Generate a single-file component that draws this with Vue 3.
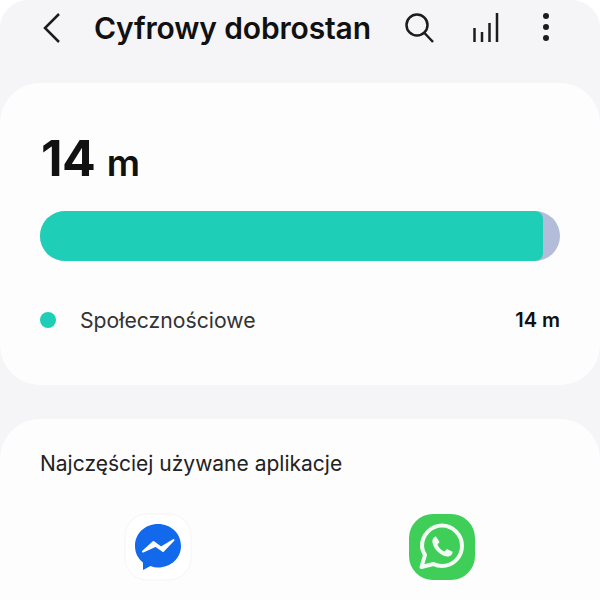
<script setup>
const apps = [{ name: "messenger" }, { name: "whatsapp" }];
</script>

<template>
  <div class="screen">
    <header class="topbar">
      <svg class="back" width="20" height="32" viewBox="0 0 20 32">
        <path d="M17 2 L3 16 L17 30" />
      </svg>
      <h1>Cyfrowy dobrostan</h1>
      <svg class="search" width="32" height="32" viewBox="0 0 32 32">
        <circle cx="14" cy="13" r="10.5" />
        <path d="M21.5 21 L30 30" />
      </svg>
      <svg class="bars" width="26" height="32" viewBox="0 0 26 32">
        <path d="M1.5 16 V30 M9 20 V30 M16.5 11 V30 M24 1 V30" />
      </svg>
      <div class="dots"><span></span><span></span><span></span></div>
    </header>

    <section class="card usage">
      <div class="total">14 <small>m</small></div>
      <div class="bar"><div class="fill"></div></div>
      <div class="legend">
        <span class="dot"></span>
        <span class="label">Społecznościowe</span>
        <span class="time">14 m</span>
      </div>
    </section>

    <section class="card apps">
      <h2>Najczęściej używane aplikacje</h2>
      <div class="appRow">
        <div v-for="app in apps" :key="app.name" class="appCell">
          <svg v-if="app.name == 'messenger'" width="68" height="68" viewBox="0 0 68 68">
            <rect x="1" y="1" width="66" height="66" rx="22" fill="#fff" stroke="#f6f4f6" />
            <path d="M34 11 C21 11 11 20.500 11 33 C11 40 14 45.500 19 49.500 V57 L26.500 53 C29 54 31.500 54.500 34 54.500 C47 54.500 57 45 57 33 C57 20.500 47 11 34 11 Z" fill="#1269ec" />
            <path d="M19 38.500 L29.500 29 L37 34.500 L49.500 27 L39 38 L31.500 32.800 Z" fill="#fff" stroke="#fff" stroke-width="2" stroke-linejoin="round" />
          </svg>
          <svg v-else width="68" height="68" viewBox="0 0 68 68">
            <rect x="1" y="1" width="66" height="66" rx="24" fill="#3fcf58" />
            <path d="M13.500 54 L17 42 C15 38.500 14 36 14 33 C14 22 23 12.500 34 12.500 C45 12.500 54 22 54 33 C54 44 45 53 34 53 C31 53 28 52.300 25.500 51 Z" fill="none" stroke="#f4fbf4" stroke-width="4" stroke-linejoin="round" />
            <path d="M28 23.500 C26 23.500 24 26 24.500 29.500 C25.500 36 32 42.500 39 43.500 C42 44 45 41.500 44.500 38.800 L39 36 L36.500 38.500 C33.500 37.500 30.500 34.500 29.500 31.500 L31.500 29 Z" fill="#f4fbf4" />
          </svg>
        </div>
      </div>
    </section>
  </div>
</template>

<style scoped>
.screen {
  width: 600px;
  height: 600px;
  overflow: hidden;
  background: #f5f5f8;
  border-radius: 28px 28px 0 0;
  font-family: Inter, Roboto, "Liberation Sans", sans-serif;
  color: #111;
}

.topbar {
  height: 83px;
  display: flex;
  align-items: center;
  padding: 0 41px 27px 42px;
  box-sizing: border-box;
}

.topbar svg {
  fill: none;
  stroke: #1c1c1e;
  stroke-width: 2.5;
  flex: none;
}

.topbar h1 {
  margin: 0 0 0 32px;
  font-size: 30px;
  font-weight: 600;
  letter-spacing: -0.15px;
  line-height: 36px;
  width: 277px;
  white-space: nowrap;
}

.search {
  margin-left: 32px;
}

.bars {
  margin-left: 38px;
}

.dots {
  margin-left: 44px;
  display: flex;
  flex-direction: column;
  gap: 5px;
  margin-bottom: 2px;
}

.dots span {
  width: 6px;
  height: 6px;
  border-radius: 50%;
  background: #1c1c1e;
}

.card {
  background: #fdfdfe;
  border-radius: 40px;
  padding: 0 40px;
}

.usage {
  height: 302px;
  box-sizing: border-box;
  padding-top: 46px;
  margin-bottom: 34px;
}

.total {
  font-size: 50px;
  font-weight: 700;
  letter-spacing: -0.5px;
  line-height: 58px;
  padding-left: 1px;
}

.total small {
  font-size: 37px;
  font-weight: 600;
  letter-spacing: 0;
}

.bar {
  margin-top: 19px;
  height: 50px;
  border-radius: 25px;
  background: #b3bcd8;
  overflow: hidden;
}

.fill {
  width: 503px;
  height: 100%;
  background: #1fceb6;
  border-radius: 0 8px 8px 0;
}

.legend {
  margin-top: 46px;
  display: flex;
  align-items: center;
  font-size: 21.2px;
}

.dot {
  width: 16px;
  height: 16px;
  border-radius: 50%;
  background: #1fceb6;
  margin-right: 24px;
}

.label {
  flex: 1;
  color: #333;
}

.time {
  font-size: 20px;
  font-weight: 600;
}

.apps {
  height: 300px;
  padding-top: 30px;
  box-sizing: border-box;
}

.apps h2 {
  margin: 0;
  font-size: 21px;
  font-weight: 400;
  line-height: 30px;
  color: #222;
}

.appRow {
  margin-top: 34px;
  display: flex;
  gap: 216px;
  padding-left: 84px;
}
</style>

<style>
html,
body {
  background: #fff;
}
</style>
